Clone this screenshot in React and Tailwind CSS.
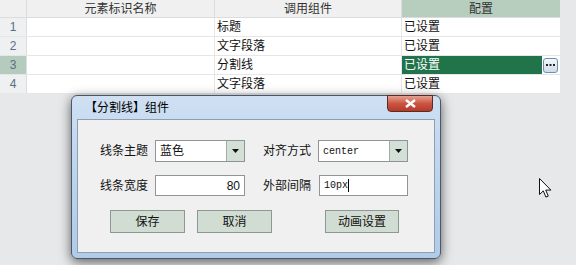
import React from 'react';

const rows = [
  { no: 1, name: '', comp: '标题', conf: '已设置' },
  { no: 2, name: '', comp: '文字段落', conf: '已设置' },
  { no: 3, name: '', comp: '分割线', conf: '已设置', active: true },
  { no: 4, name: '', comp: '文字段落', conf: '已设置' },
];

function Select({ value, mono }) {
  return (
    <div className="flex w-[90px] h-[22px] border border-[#8f9497] bg-white">
      <div className={`flex-1 flex items-center pl-[4px] ${mono ? "text-[10px] font-['Liberation_Mono',monospace]" : 'text-[12px]'}`}>{value}</div>
      <div className="w-[18px] flex items-center justify-center border-l border-[#a4aca6] bg-[#d3e0d6]">
        <svg width="7" height="4" viewBox="0 0 7 4"><path d="M0 0h7L3.5 4z" fill="#111" /></svg>
      </div>
    </div>
  );
}

function Btn({ children, w = 'w-[75px]' }) {
  return (
    <button className={`${w} h-[23px] border border-[#8c9990] bg-[#d1ddd3] text-[12px] text-[#111] flex items-center justify-center`}>
      {children}
    </button>
  );
}

export default function App() {
  return (
    <div className="relative w-[576px] h-[265px] overflow-hidden bg-[#e7e8ea] text-[#111] font-['Liberation_Sans','Noto_Sans_CJK_SC',sans-serif]">
      {/* grid */}
      <div className="w-[560px] bg-white text-[12px]">
        <div className="flex h-[18px] bg-[#f0f0f0] border-b border-[#dcdcdc] text-[#333]">
          <div className="w-[27px] border-r border-[#dcdcdc]" />
          <div className="w-[188px] border-r border-[#dcdcdc] flex items-center justify-center">元素标识名称</div>
          <div className="w-[187px] border-r border-[#dcdcdc] flex items-center justify-center">调用组件</div>
          <div className="flex-1 flex items-center justify-center bg-[#b7cebf]">配置</div>
        </div>
        {rows.map((r) => (
          <div key={r.no} className="flex h-[19px] border-b border-[#e6e6e6]">
            <div className={`w-[27px] border-r border-[#dcdcdc] flex items-center justify-center text-[#5b6f80] ${r.active ? 'bg-[#b5cbbd]' : 'bg-[#eef0f1]'}`}>
              {r.no}
            </div>
            <div className="w-[188px] border-r border-[#e6e6e6]">{r.name}</div>
            <div className="w-[187px] border-r border-[#e6e6e6] flex items-center pl-[2px]">{r.comp}</div>
            <div className="flex-1 flex items-center">
              <div className={`w-[140px] h-full flex items-center pl-[2px] ${r.active ? 'bg-[#21744a] text-white' : ''}`}>{r.conf}</div>
              {r.active && (
                <div className="ml-[1px] w-[15px] h-[15px] rounded-[3px] border border-[#6f8fb0] bg-gradient-to-b from-[#f4f8fc] to-[#cfdbe8] flex items-center justify-center">
                  <svg width="9" height="3" viewBox="0 0 9 3"><rect x="0" y="0" width="2" height="2" fill="#222" /><rect x="3.5" y="0" width="2" height="2" fill="#222" /><rect x="7" y="0" width="2" height="2" fill="#222" /></svg>
                </div>
              )}
            </div>
          </div>
        ))}
      </div>

      {/* dialog window */}
      <div className="absolute left-[71px] top-[95px] w-[370px] h-[164px] rounded-[6px] border border-[#48586a] bg-gradient-to-b from-[#cfe0f2] via-[#bcd3eb] to-[#b2cbe6] shadow-[0_3px_12px_rgba(0,0,0,0.6)] flex flex-col px-[5px] pb-[5px]">
        <div className="h-[23px] flex items-center pl-[8px] text-[12px] text-black">【分割线】组件</div>
        <div className="absolute right-[7px] top-[-1px] w-[46px] h-[17px] rounded-b-[4px] border border-[#5e2a22] bg-gradient-to-b from-[#e4a293] via-[#cc5542] to-[#b23c2a] flex items-center justify-center">
          <svg width="11" height="9" viewBox="0 0 11 9"><path d="M1 1l9 7M10 1L1 8" stroke="#fff" strokeWidth="2.4" /></svg>
        </div>
        <div className="flex-1 bg-[#f0f0f0] border border-[#8aa0b6] flex flex-col">
          <div className="flex items-center mt-[20px] pl-[22px] h-[22px]">
            <div className="w-[48px] text-[12px]">线条主题</div>
            <div className="ml-[7px]"><Select value="蓝色" /></div>
            <div className="ml-[18px] w-[48px] text-[12px]">对齐方式</div>
            <div className="ml-[7px]"><Select value="center" mono /></div>
          </div>
          <div className="flex items-center mt-[13px] pl-[22px] h-[21px]">
            <div className="w-[48px] text-[12px]">线条宽度</div>
            <div className="ml-[7px] w-[90px] h-[21px] border border-[#8f9497] bg-white flex items-center justify-end pr-[4px] text-[12px]">80</div>
            <div className="ml-[18px] w-[48px] text-[12px]">外部间隔</div>
            <div className="ml-[8px] w-[89px] h-[21px] border border-[#8f9497] bg-white flex items-center pl-[4px] text-[10px] font-['Liberation_Mono',monospace]">
              10px<span className="w-px h-[13px] bg-black" />
            </div>
          </div>
          <div className="flex items-center mt-[14px] pl-[32px]">
            <Btn>保存</Btn>
            <div className="ml-[12px]"><Btn>取消</Btn></div>
            <div className="ml-[53px]"><Btn w="w-[74px]">动画设置</Btn></div>
          </div>
        </div>
      </div>

      {/* mouse pointer */}
      <svg className="absolute left-[539px] top-[178px]" width="13" height="21" viewBox="0 0 13 21">
        <path d="M0.5 0.5v16l3.8-3.6 2.6 6.2 2.4-1-2.6-6h5.2z" fill="#fff" stroke="#111" strokeWidth="1" strokeLinejoin="round" />
      </svg>
    </div>
  );
}
